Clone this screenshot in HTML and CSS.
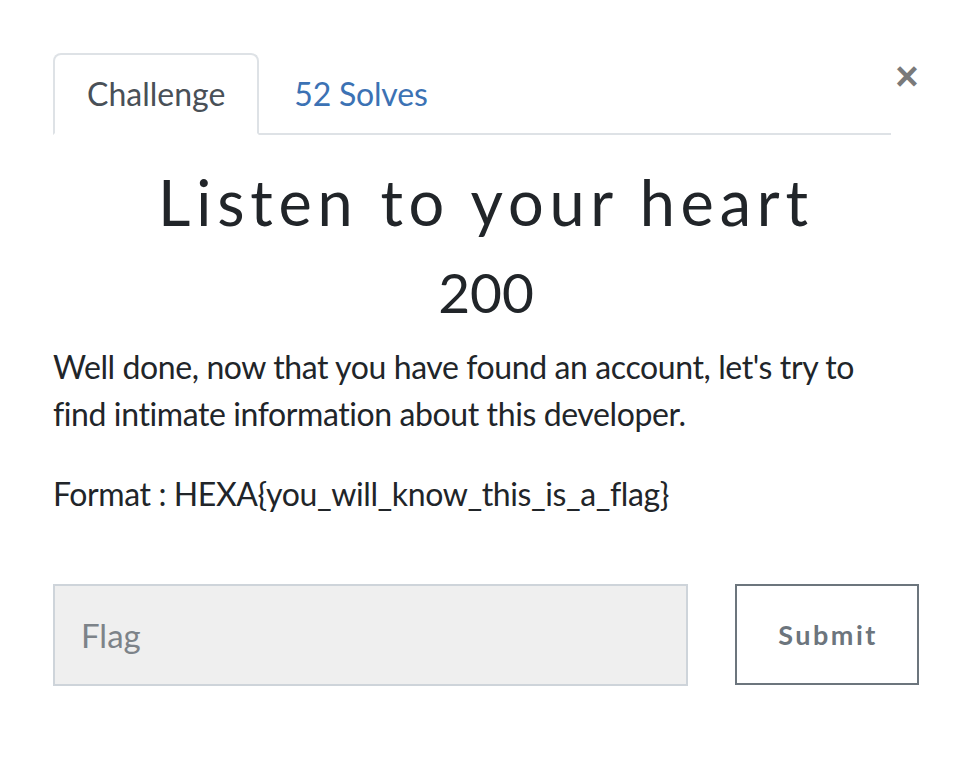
FILE: index.html
```html
<!DOCTYPE html>
<html>
<head>
<meta charset="utf-8">
<link rel="stylesheet" href="styles.css">
</head>
<body>
<div class="modal">
  <div class="header">
    <ul class="tabs">
      <li class="tab active">Challenge</li>
      <li class="tab link">52 Solves</li>
    </ul>
    <button class="close" aria-label="Close">&times;</button>
  </div>
  <h2 class="title">Listen to your heart</h2>
  <h3 class="value">200</h3>
  <div class="desc">
    <p>Well done, now that you have found an account, let's try to find intimate information about this developer.</p>
    <p class="last">Format : HEXA{you_will_know_this_is_a_flag}</p>
  </div>
  <form class="form">
    <input class="flag" type="text" placeholder="Flag">
    <button class="submit" type="button">Submit</button>
  </form>
</div>
</body>
</html>
```
FILE: styles.css
```css
html, body { margin: 0; padding: 0; background: #fff; }
body { font-family: Lato, "Open Sans", sans-serif; color: #212529; }
.modal { width: 866px; padding: 53px 0 0 53px; }
.header { display: flex; align-items: flex-start; }
.tabs { list-style: none; margin: 0; padding: 0; display: flex; width: 838px; border-bottom: 2px solid #dee2e6; }
.tab { font-size: 32px; line-height: 38px; padding: 20px 32px 20px 32px; margin-bottom: -2px; border: 2px solid transparent; border-radius: 8px 8px 0 0; }
.tab.active { color: #495057; border-color: #dee2e6 #dee2e6 #fff; background: #fff; }
.tab.link { color: #3c72b4; padding-left: 33px; letter-spacing: -0.2px; }
.close { margin: 10px 0 0 4px; width: 24px; height: 26px; padding: 0; border: 0; background: none; color: #7a7a7a; font-family: "Liberation Sans", Arial, sans-serif; font-weight: 700; font-size: 40px; line-height: 24px; cursor: pointer; }
.title { margin: 31px 0 0 0; text-align: center; font-family: Lato, sans-serif; font-weight: 400; font-size: 63px; line-height: 72px; letter-spacing: 5.8px; text-indent: 0; color: #212529; }
.value { margin: 23px 0 0 0; text-align: center; font-family: Lato, sans-serif; font-weight: 400; font-size: 55px; line-height: 62px; color: #212529; }
.desc { width: 840px; margin-top: 20px; font-size: 32px; line-height: 47px; letter-spacing: -0.4px; }
.desc p { margin: 0 0 33px 0; }
.desc p.last { margin-bottom: 0; }
.form { display: flex; justify-content: space-between; margin-top: 67px; }
.flag { box-sizing: border-box; width: 635px; height: 102px; border: 2px solid #ced4da; background: #efefef; padding: 0 26px; font-family: Lato, sans-serif; font-size: 33px; color: #495057; outline: none; }
.flag::placeholder { color: #7d8389; }
.submit { box-sizing: border-box; width: 184px; height: 101px; border: 2px solid #6c757d; background: #fff; color: #6c757d; font-family: Lato, sans-serif; font-weight: 700; font-size: 27px; letter-spacing: 2.5px; padding: 0 0 0 2px; }
```
